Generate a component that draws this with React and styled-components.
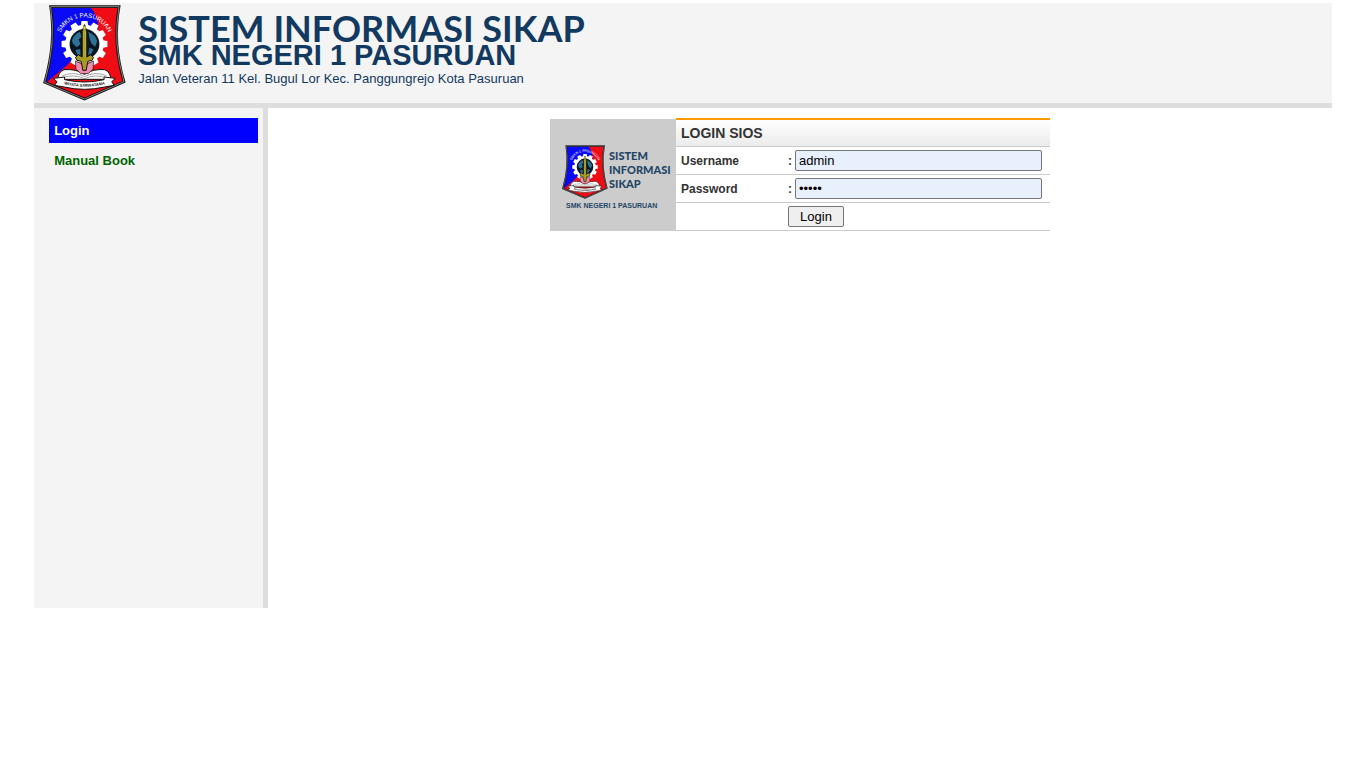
import React from "react";
import styled, { createGlobalStyle } from "styled-components";

const GlobalStyle = createGlobalStyle`
  * { box-sizing: border-box; }
  body {
    margin: 0;
    background: #fff;
    color: #333;
    font-family: "Liberation Sans", Arial, sans-serif;
    font-size: 13px;
  }
`;

const Page = styled.div`
  width: 95%;
  margin: 0 auto;
  padding-top: 3px;
`;

const Header = styled.header`
  display: flex;
  align-items: flex-start;
  gap: 12px;
  height: 105px;
  padding: 2px 9px 0;
  background: #f4f4f4;
  border-bottom: 5px solid #ddd;
`;

const Brand = styled.div`
  color: #12395f;
  padding-top: 6px;
  white-space: nowrap;
`;

const Title = styled.h1`
  margin: 0;
  font-family: Lato, sans-serif;
  font-size: 36px;
  font-weight: 700;
  line-height: 34px;
`;

const School = styled.p`
  margin: 0;
  font-size: 29px;
  font-weight: 700;
  line-height: 20px;
`;

const Address = styled.p`
  margin: 6px 0 0;
  font-size: 13px;
  line-height: 16px;
`;

const Body = styled.div`
  display: flex;
  align-items: flex-start;
`;

const Sidebar = styled.nav`
  flex: none;
  display: flex;
  flex-direction: column;
  gap: 5px;
  width: 234px;
  min-height: 500px;
  padding: 10px 5px 0 15px;
  background: #f4f4f4;
  border-right: 5px solid #ddd;
`;

const NavLink = styled.a`
  padding: 0 5px;
  font-size: 13px;
  font-weight: 700;
  line-height: 25px;
  text-decoration: none;
  color: ${(p) => (p.$active ? "#fff" : "#006400")};
  background: ${(p) => (p.$active ? "#00f" : "transparent")};
`;

const Main = styled.main`
  flex: 1;
  display: flex;
  justify-content: center;
  padding: 10px;
`;

const LoginCard = styled.section`
  display: flex;
  width: 500px;
`;

const LogoPanel = styled.div`
  flex: none;
  display: flex;
  flex-direction: column;
  justify-content: center;
  gap: 2px;
  width: 126px;
  margin-top: 1px;
  padding: 6px 0 0 12px;
  background: #ccc;
  color: #1f4667;
`;

const LogoRow = styled.div`
  display: flex;
  align-items: flex-start;
  gap: 1px;
`;

const LogoWords = styled.div`
  padding-top: 4px;
  font-family: Lato, sans-serif;
  font-size: 11px;
  font-weight: 900;
  line-height: 14px;
`;

const LogoCaption = styled.div`
  padding-left: 4px;
  font-size: 7px;
  font-weight: 700;
  line-height: 10px;
`;

const Form = styled.form`
  flex: 1;
`;

const FormTitle = styled.h2`
  margin: 0;
  padding: 0 5px;
  border-top: 2px solid #f90;
  border-bottom: 1px solid #ccc;
  background: linear-gradient(#fff, #ebebeb);
  font-size: 14px;
  line-height: 26px;
`;

const Row = styled.div`
  display: flex;
  align-items: center;
  height: 28px;
  padding: 0 8px 0 5px;
  border-bottom: 1px solid #ccc;
  font-size: 12px;
`;

const Label = styled.label`
  flex: none;
  width: 107px;
  font-weight: 700;
`;

const Colon = styled.span`
  flex: none;
  width: 7px;
  font-weight: 700;
`;

const Field = styled.input`
  flex: 1;
  min-width: 0;
  height: 21px;
  padding: 1px 3px;
  border: 1px solid #767676;
  border-radius: 2px;
  background: #e8f0fe;
  color: #000;
  font-family: inherit;
  font-size: 13px;
`;

const Actions = styled(Row)`
  padding-left: 112px;
`;

const Submit = styled.button`
  width: 56px;
  height: 21px;
  padding: 0;
  border: 1px solid #767676;
  border-radius: 2px;
  background: #efefef;
  color: #000;
  font-family: inherit;
  font-size: 13px;
`;

const EmblemSvg = styled.svg`
  flex: none;
  display: block;
`;

const SHIELD = "M49 21H255Q235 130 270 246L151 298L31 248Q66 130 49 21Z";
const TEETH = Array.from({ length: 12 }, (_, i) => i * 30);

function Emblem({ id, width, height }) {
  return (
    <EmblemSvg
      width={width}
      height={height}
      viewBox="26 16 250 288"
      preserveAspectRatio="none"
      role="img"
      aria-label="SMKN 1 Pasuruan"
    >
      <defs>
        <clipPath id={`${id}-shield`}>
          <path d={SHIELD} />
        </clipPath>
        <path id={`${id}-arc`} d="M79 98A80 80 0 0 1 223 98" />
      </defs>
      <g clipPath={`url(#${id}-shield)`}>
        <path fill="#f00c14" d="M20 10H280V310H20Z" />
        <path fill="#0a0af5" d="M20 10H158Q196 48 192 90L100 195L38 247L20 250Z" />
      </g>
      <path d={SHIELD} fill="none" stroke="#111" strokeWidth="8" />
      <path d={SHIELD} fill="none" stroke="#bbb" strokeWidth="2" />
      <text fill="#fff" fontFamily="Liberation Sans, Arial, sans-serif" fontSize="19">
        <textPath href={`#${id}-arc`} startOffset="50%" textAnchor="middle">
          SMKN 1 PASURUAN
        </textPath>
      </text>
      <g fill="#fff">
        {TEETH.map((a) => (
          <path key={a} d="M139 84L142 64H160L163 84Z" transform={`rotate(${a} 151 133)`} />
        ))}
        <circle cx="151" cy="133" r="58" />
      </g>
      <circle cx="151" cy="133" r="45" fill="#0b1624" />
      <path
        fill="#2f7096"
        d="M113 123Q118 105 137 96L142 112L133 119L139 133L128 143L117 133ZM163 97Q185 106 189 125L183 141L171 130L166 116ZM165 144L178 149L171 163L162 165ZM124 151L138 148L139 168L129 164Z"
      />
      <path
        d="M71 239Q71 218 89 210Q126 207 151 224Q176 207 212 210Q230 218 230 239Z"
        fill="#fff"
        stroke="#111"
        strokeWidth="3"
      />
      <path
        d="M84 228Q121 214 151 231Q181 214 217 228M80 235Q120 222 151 237Q181 222 221 235"
        fill="none"
        stroke="#777"
        strokeWidth="2"
      />
      <path
        d="M124 184L140 191L151 203L162 191L178 184L177 208L162 222H140L125 208Z"
        fill="#f08bae"
        stroke="#111"
        strokeWidth="2"
      />
      <path
        d="M144 94L151 75L158 94V172L170 165L178 173L174 182L161 185L156 212H146L141 185L128 182L124 173L132 165L144 172Z"
        fill="#a79a20"
        stroke="#111"
        strokeWidth="3"
      />
      <path d="M149 95V171M154 95V171" stroke="#c8ba40" strokeWidth="2" />
      <circle cx="151" cy="84" r="4" fill="#e0d255" />
      <path
        d="M57 236L91 232V240Q151 254 210 240V232L244 236L233 246L240 257L211 262Q151 276 90 262L61 257L68 246Z"
        fill="#fff"
        stroke="#111"
        strokeWidth="3"
        strokeLinejoin="round"
      />
      <path id={`${id}-ribbon`} d="M90 254Q151 269 212 254" fill="none" />
      <text fill="#111" fontFamily="Liberation Sans, Arial, sans-serif" fontSize="12" fontWeight="700">
        <textPath href={`#${id}-ribbon`} startOffset="50%" textAnchor="middle">
          WIYATA SARWATAMA
        </textPath>
      </text>
    </EmblemSvg>
  );
}

export default function App() {
  return (
    <>
      <GlobalStyle />
      <Page>
        <Header>
          <Emblem id="header" width={83} height={96} />
          <Brand>
            <Title>SISTEM INFORMASI SIKAP</Title>
            <School>SMK NEGERI 1 PASURUAN</School>
            <Address>Jalan Veteran 11 Kel. Bugul Lor Kec. Panggungrejo Kota Pasuruan</Address>
          </Brand>
        </Header>
        <Body>
          <Sidebar>
            <NavLink href="#login" $active>Login</NavLink>
            <NavLink href="#manual-book">Manual Book</NavLink>
          </Sidebar>
          <Main>
            <LoginCard>
              <LogoPanel>
                <LogoRow>
                  <Emblem id="card" width={46} height={54} />
                  <LogoWords>
                    SISTEM
                    <br />
                    INFORMASI
                    <br />
                    SIKAP
                  </LogoWords>
                </LogoRow>
                <LogoCaption>SMK NEGERI 1 PASURUAN</LogoCaption>
              </LogoPanel>
              <Form onSubmit={(e) => e.preventDefault()}>
                <FormTitle>LOGIN SIOS</FormTitle>
                <Row>
                  <Label htmlFor="username">Username</Label>
                  <Colon>:</Colon>
                  <Field id="username" type="text" defaultValue="admin" />
                </Row>
                <Row>
                  <Label htmlFor="password">Password</Label>
                  <Colon>:</Colon>
                  <Field id="password" type="password" defaultValue="admin" />
                </Row>
                <Actions>
                  <Submit type="submit">Login</Submit>
                </Actions>
              </Form>
            </LoginCard>
          </Main>
        </Body>
      </Page>
    </>
  );
}
